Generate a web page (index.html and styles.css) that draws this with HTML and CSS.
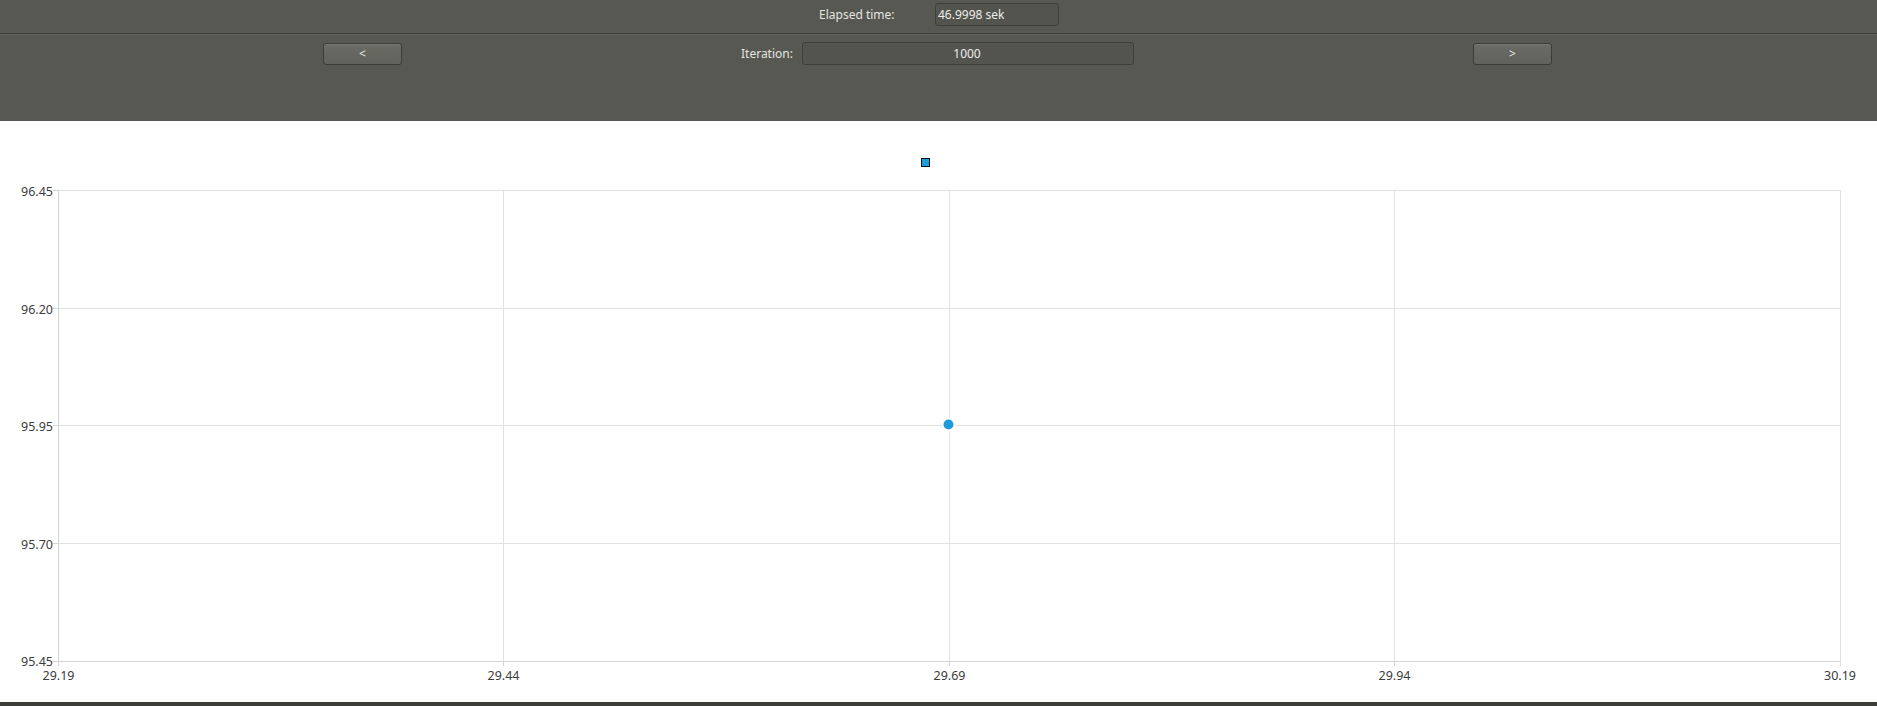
FILE: index.html
```html
<!DOCTYPE html>
<html>
<head>
<meta charset="utf-8">
<link rel="stylesheet" href="styles.css">
</head>
<body>
<div class="app">
  <div class="panel">
    <div class="row-time">
      <div class="time-group">
        <span class="label time-label">Elapsed time:</span>
        <div class="field time-field">46.9998 sek</div>
      </div>
    </div>
    <div class="row-iter">
      <div class="btn btn-prev">&lt;</div>
      <span class="label iter-label">Iteration:</span>
      <div class="field iter-field">1000</div>
      <div class="btn btn-next">&gt;</div>
    </div>
  </div>
  <div class="chart">
    <svg class="plot" width="1877" height="581" viewBox="0 0 1877 581" xmlns="http://www.w3.org/2000/svg">
      <g stroke="#e2e2e2" stroke-width="1" fill="none">
        <line x1="58" y1="187.5" x2="1840" y2="187.5"/>
        <line x1="58" y1="304.5" x2="1840" y2="304.5"/>
        <line x1="58" y1="422.5" x2="1840" y2="422.5"/>
        <line x1="1840" y1="69.5" x2="58" y2="69.5"/>
        <line x1="503.5" y1="69" x2="503.5" y2="540"/>
        <line x1="949.5" y1="69" x2="949.5" y2="540"/>
        <line x1="1394.5" y1="69" x2="1394.5" y2="540"/>
        <line x1="1840.5" y1="69" x2="1840.5" y2="545"/>
      </g>
      <g stroke="#d4d4d4" stroke-width="1" fill="none">
        <line x1="58.5" y1="69" x2="58.5" y2="545"/>
        <line x1="53" y1="540.5" x2="1841" y2="540.5"/>
        <line x1="53" y1="69.5" x2="58" y2="69.5"/>
        <line x1="53" y1="187.5" x2="58" y2="187.5"/>
        <line x1="53" y1="304.5" x2="58" y2="304.5"/>
        <line x1="53" y1="422.5" x2="58" y2="422.5"/>
        <line x1="503.5" y1="541" x2="503.5" y2="545"/>
        <line x1="949.5" y1="541" x2="949.5" y2="545"/>
        <line x1="1394.5" y1="541" x2="1394.5" y2="545"/>
      </g>
      <g class="ylab" text-anchor="end">
        <text x="53" y="75">96.45</text>
        <text x="53" y="193">96.20</text>
        <text x="53" y="310">95.95</text>
        <text x="53" y="428">95.70</text>
        <text x="53" y="545">95.45</text>
      </g>
      <g class="xlab" text-anchor="middle">
        <text x="58.5" y="559">29.19</text>
        <text x="503.5" y="559">29.44</text>
        <text x="949.5" y="559">29.69</text>
        <text x="1394.5" y="559">29.94</text>
        <text x="1840" y="559">30.19</text>
      </g>
      <rect x="921.5" y="37.5" width="8" height="8" fill="#209bdd" stroke="#111" stroke-width="1"/>
      <circle cx="948.5" cy="303.5" r="6" fill="#1f9bdb" stroke="#ffffff" stroke-width="2"/>
    </svg>
  </div>
  <div class="bottom-strip"></div>
</div>
</body>
</html>
```

FILE: styles.css
```css
html, body {
  margin: 0;
  padding: 0;
}
body {
  width: 1877px;
  height: 706px;
  overflow: hidden;
  background: #575852;
  font-family: "Noto Sans", "Open Sans", "DejaVu Sans", sans-serif;
}
.app {
  display: flex;
  flex-direction: column;
  height: 706px;
}
.panel {
  background: #575852;
  height: 121px;
  display: flex;
  flex-direction: column;
}
.row-time {
  box-sizing: border-box;
  height: 34px;
  border-bottom: 1px solid #3d3e39;
  box-shadow: 0 1px 0 #5f605a;
  display: flex;
  justify-content: center;
  align-items: flex-start;
  padding-top: 3px;
}
.time-group {
  display: flex;
  align-items: center;
  padding-left: 1px;
}
.label {
  color: #e4e4e0;
  font-size: 12px;
}
.time-label {
  width: 116px;
}
.field {
  box-sizing: border-box;
  height: 23px;
  border: 1px solid #3e3f3a;
  border-radius: 3px;
  background: #53544e;
  color: #ececea;
  font-size: 12px;
  display: flex;
  align-items: center;
}
.time-field {
  width: 124px;
  padding-left: 2px;
}
.row-iter {
  display: grid;
  grid-template-columns: 79px 339px 61px 332px 339px 79px;
  padding-left: 323px;
  padding-top: 8px;
  align-items: center;
}
.btn-prev {
  grid-column: 1;
}
.iter-label {
  grid-column: 3;
}
.iter-field {
  grid-column: 4;
  justify-content: center;
  padding-right: 2px;
}
.btn-next {
  grid-column: 6;
}
.btn {
  box-sizing: border-box;
  height: 22px;
  width: 79px;
  border: 1px solid #3b3c37;
  border-radius: 3px;
  background: linear-gradient(#6b6c66, #61625c);
  box-shadow: inset 0 1px 0 #77786f;
  color: #e8e8e4;
  font-size: 12px;
  display: flex;
  align-items: center;
  justify-content: center;
}
.chart {
  background: #ffffff;
  height: 581px;
  flex: none;
}
.plot {
  display: block;
}
.ylab text, .xlab text {
  font-family: "Noto Sans", "Open Sans", "DejaVu Sans", sans-serif;
  font-size: 12.5px;
  fill: #3c3c3c;
}
.bottom-strip {
  height: 4px;
  background: #3c3d38;
  flex: none;
}
```
